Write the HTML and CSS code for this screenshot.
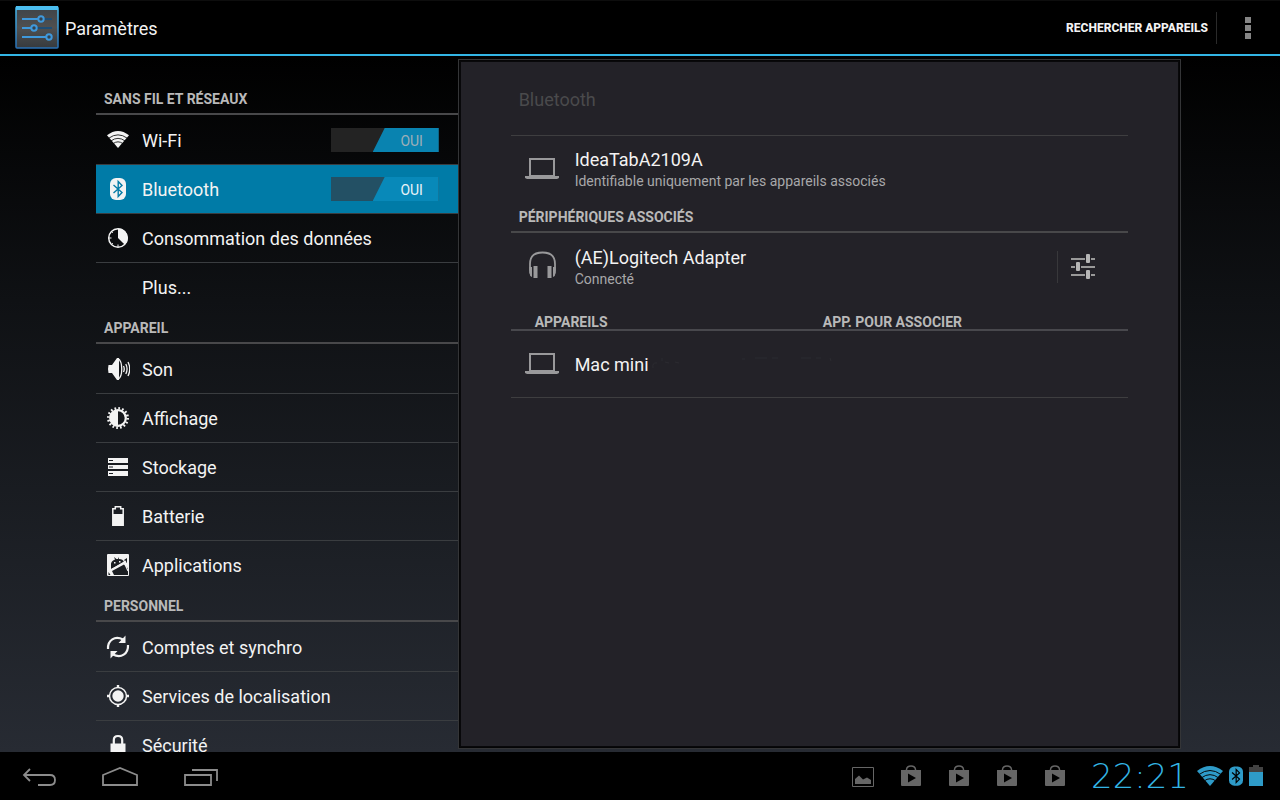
FILE: index.html
```html
<!DOCTYPE html>
<html lang="fr">
<head>
<meta charset="utf-8">
<meta name="viewport" content="width=device-width, initial-scale=1">
<title>Paramètres</title>
<link rel="stylesheet" href="styles.css">
</head>
<body>
<svg class="defs" aria-hidden="true">
  <defs>
    <linearGradient id="tile" x1="0" y1="0" x2="0" y2="1"><stop offset="0" stop-color="#3e4348"/><stop offset=".5" stop-color="#505050"/><stop offset="1" stop-color="#363a3e"/></linearGradient>
    <linearGradient id="edge" x1="0" y1="0" x2="0" y2="1"><stop offset="0" stop-color="#49bdf0"/><stop offset="1" stop-color="#286fb3"/></linearGradient>
    <symbol id="wifi" viewBox="0 0 26 20">
      <path fill="currentColor" d="M13 20 0 5Q13-5 26 5Z"/>
      <path class="wifi-gap" d="M2 8.500Q13 .5 24 8.500M4.500 11.800Q13 5.500 21.500 11.800M7 15Q13 10.500 19 15"/>
    </symbol>
    <symbol id="bt" viewBox="0 0 16 22">
      <rect width="16" height="22" rx="6" fill="currentColor"/>
      <path class="bt-rune" d="M3.500 7 12 14.500 8.200 18.500V3.500L12 7.500 3.500 15"/>
    </symbol>
    <symbol id="laptop" viewBox="0 0 34 22">
      <path fill="none" stroke="currentColor" stroke-width="2" d="M5 1h24v17H5z"/>
      <path fill="currentColor" d="M0 18h34v2l-2 1H2l-2-1z"/>
    </symbol>
    <symbol id="bag" viewBox="0 0 22 22">
      <path fill="none" stroke="currentColor" stroke-width="1.500" d="M6.500 6V4.500Q7 1 11 1t4.500 3.500V6"/>
      <path fill="currentColor" fill-rule="evenodd" d="M1 5h20v15q0 1-1 1H2q-1 0-1-1zM8 8.500v9l8-4.500z"/>
    </symbol>
  </defs>
</svg>

<header class="action-bar">
  <svg class="app-icon" viewBox="0 0 44 44" aria-hidden="true">
    <rect x="1" y="1" width="42" height="41" rx="1" fill="url(#tile)" stroke="url(#edge)" stroke-width="1.500"/>
    <path fill="#4bbef0" d="M1 0h42v4H1z"/>
    <path stroke="#1f4d74" stroke-width="2" d="M7 13h30M7 22h30"/>
    <path stroke="#3f99dc" stroke-width="2" d="M7 13h16M7 22h9M7 31h24"/>
    <g fill="#34414c" stroke="#3f99dc" stroke-width="2"><circle cx="26" cy="13" r="2.700"/><circle cx="19" cy="22" r="2.700"/><circle cx="34" cy="31" r="2.700"/></g>
  </svg>
  <h1 class="title">Paramètres</h1>
  <button class="action" type="button">RECHERCHER APPAREILS</button>
  <button class="overflow" type="button" aria-label="Plus d'options"><svg width="6" height="22" viewBox="0 0 6 22"><path fill="#858585" d="M0 0h6v6H0zM0 8h6v6H0zM0 16h6v6H0z"/></svg></button>
</header>

<main class="content">
  <nav class="sidebar" aria-label="Paramètres">
    <h2 class="category">SANS FIL ET RÉSEAUX</h2>
    <ul class="list">
      <li class="row">
        <a class="link" href="#"><svg class="icon" viewBox="0 0 24 24"><use href="#wifi" x="1" y="3" width="22" height="17"/></svg>Wi-Fi</a>
        <label class="switch"><input type="checkbox" role="switch" aria-label="Wi-Fi" checked><span class="thumb">OUI</span></label>
      </li>
      <li class="row selected">
        <a class="link" href="#" aria-current="page"><svg class="icon" viewBox="0 0 24 24"><use href="#bt" x="4" y="1" width="16" height="22"/></svg>Bluetooth</a>
        <label class="switch"><input type="checkbox" role="switch" aria-label="Bluetooth" checked><span class="thumb">OUI</span></label>
      </li>
      <li class="row"><a class="link" href="#"><svg class="icon" viewBox="0 0 24 24"><circle cx="12" cy="12" r="9.300" fill="none" stroke="currentColor" stroke-width="1.500"/><path fill="currentColor" d="M12 12V2.500A9.500 9.500 0 0 1 18.800 18.800z"/><path stroke="currentColor" d="M3 12h2.500M12 21v-2.500M5.300 5.300l1.500 1.500M5.300 18.700l1.500-1.500"/></svg>Consommation des données</a></li>
      <li class="row"><a class="link" href="#"><span class="icon"></span>Plus...</a></li>
    </ul>
    <h2 class="category">APPAREIL</h2>
    <ul class="list">
      <li class="row"><a class="link" href="#"><svg class="icon" viewBox="0 0 24 24"><path fill="currentColor" d="M2.500 8H6l5-7h2v22h-2l-5-7H2.500q-1-4 0-8z"/><g fill="none" stroke="currentColor" stroke-width="1.300"><path d="M12 1.500c5 3 5 18 0 21"/><path d="M17.500 9q1.500 3 0 6M19.800 7q2.500 5 0 10M22 5q3.500 7 0 14"/></g></svg>Son</a></li>
      <li class="row"><a class="link" href="#"><svg class="icon" viewBox="0 0 24 24"><circle cx="12" cy="12" r="9.700" fill="none" stroke="currentColor" stroke-width="2.600" stroke-dasharray="1.700 2.110"/><circle cx="12" cy="12" r="7.800" fill="none" stroke="currentColor" stroke-width="2.200"/><path fill="currentColor" d="M12 4a8 8 0 0 0 0 16z"/></svg>Affichage</a></li>
      <li class="row"><a class="link" href="#"><svg class="icon" viewBox="0 0 24 24"><path fill="currentColor" fill-rule="evenodd" d="M2 3h20v5H2zM2 10h20v4H2zM2 16h20v5H2zM3 5v1h4V5zM3 11.500v1h4v-1zM3 18v1h4v-1z"/></svg>Stockage</a></li>
      <li class="row"><a class="link" href="#"><svg class="icon" viewBox="0 0 24 24"><path fill="none" stroke="currentColor" stroke-width="1.500" d="M6.800 21.300V4.800h2.500v-2h5.400v2h2.500v16.500z"/><path fill="currentColor" d="M7 10h10v11H7z"/></svg>Batterie</a></li>
      <li class="row"><a class="link" href="#"><svg class="icon" viewBox="0 0 24 24"><rect x="1" y="1" width="22" height="22" rx="1" fill="currentColor"/><path fill="#1b1e22" d="M5 12Q4.500 8 9 6.500L8 4l2.500 2H12V4l1 2q4 0 5 3l-9 5-4 2zM6 18l12-6.500 4 4V22H8zM2.500 19l2 3h-2zM18 7l3-2v5z"/><path fill="currentColor" d="M8 9h1.500v1.500H8zM13 8h1.500v1.500H13z"/><path stroke="currentColor" stroke-width="1.200" d="M3 18 20 8M18 9l4 9"/></svg>Applications</a></li>
    </ul>
    <h2 class="category">PERSONNEL</h2>
    <ul class="list">
      <li class="row"><a class="link" href="#"><svg class="icon" viewBox="0 0 24 24"><g fill="none" stroke="currentColor" stroke-width="2.200"><path d="M2 14C1.500 5 9 .5 17 4.500"/><path d="M22 10c.5 9-7 13.500-15 9.500"/></g><path fill="currentColor" d="M19.500.5v7.500h-7zM4.500 23.500V16h7z"/></svg>Comptes et synchro</a></li>
      <li class="row"><a class="link" href="#"><svg class="icon" viewBox="0 0 24 24"><circle cx="12" cy="12" r="8.500" fill="none" stroke="currentColor" stroke-width="1.500"/><circle cx="12" cy="12" r="5.700" fill="currentColor"/><path stroke="currentColor" stroke-width="2.400" d="M12 1v3M12 20v3M1 12h3M20 12h3"/></svg>Services de localisation</a></li>
      <li class="row"><a class="link" href="#"><svg class="icon" viewBox="0 0 24 24"><path fill="none" stroke="currentColor" stroke-width="2.200" d="M7.800 12V7q0-4 4.200-4t4.200 4v5"/><path fill="currentColor" d="M4.500 10.500h15V23h-15z"/></svg>Sécurité</a></li>
    </ul>
  </nav>

  <section class="panel" aria-label="Bluetooth">
    <p class="status">Bluetooth</p>
    <div class="device">
      <svg class="device-icon" viewBox="0 0 34 34"><use href="#laptop" y="6" width="34" height="22"/></svg>
      <div class="device-text"><span class="name">IdeaTabA2109A</span><span class="summary">Identifiable uniquement par les appareils associés</span></div>
    </div>
    <h2 class="category">PÉRIPHÉRIQUES ASSOCIÉS</h2>
    <div class="device paired">
      <svg class="device-icon" viewBox="0 0 34 34"><path fill="none" stroke="currentColor" stroke-width="1.800" d="M6 24q-1-1-1-4v-6Q5 2.500 17.500 2.500T30 14v6q0 3-1 4"/><path fill="currentColor" d="M8.500 16h4v12h-4zM22.500 16h4v12h-4zM4.500 17H7v10q-2.500-1-2.500-4zM28 17h2.500v6q0 3-2.500 4z"/></svg>
      <div class="device-text"><span class="name">(AE)Logitech Adapter</span><span class="summary">Connecté</span></div>
      <button class="tune" type="button" aria-label="Réglages du périphérique"><svg width="26" height="26" viewBox="0 0 26 26"><path stroke="#999" stroke-width="2" d="M1 5h14M21 5h4M1 13h4M11 13h14M1 21h14M21 21h4"/><g fill="#b5b5b5"><rect x="16" y="0" width="4" height="9" rx="1"/><rect x="6" y="8" width="4" height="9" rx="1"/><rect x="16" y="16" width="4" height="9" rx="1"/></g></svg></button>
    </div>
    <div class="split"><h2>APPAREILS</h2><h2>APP. POUR ASSOCIER</h2></div>
    <div class="device last">
      <svg class="device-icon" viewBox="0 0 34 34"><use href="#laptop" y="6" width="34" height="22"/></svg>
      <div class="device-text"><span class="name">Mac mini</span></div>
      <svg class="residue" width="200" height="14" viewBox="0 0 200 14" aria-hidden="true"><path fill="none" stroke="#2b2b30" d="M6 6Q1 5 2 11M11 1v3M14 5l4 1M24 5l4 1M91 2h3M104 1h12M121 1h6M150 1h10M165 1h5M179 1l1 3"/></svg>
    </div>
  </section>
</main>

<footer class="system-bar">
  <button class="nav-key" type="button" aria-label="Retour"><svg width="36" height="22" viewBox="0 0 36 22"><path fill="none" stroke="#8c8c8c" stroke-width="1.800" d="M8 4 2 10l6 6M2 10h26q5 0 5 5t-5 5H16"/></svg></button>
  <button class="nav-key" type="button" aria-label="Accueil"><svg width="38" height="22" viewBox="0 0 38 22"><path fill="none" stroke="#8c8c8c" stroke-width="1.800" d="M2 20V10l17-7 17 7v10z"/></svg></button>
  <button class="nav-key" type="button" aria-label="Applications récentes"><svg width="36" height="22" viewBox="0 0 36 22"><path fill="none" stroke="#8c8c8c" stroke-width="1.800" d="M3 10h26v10H3zM10 5h25v11"/></svg></button>
  <div class="notifications">
    <svg class="note" viewBox="0 0 22 22"><path fill="none" stroke="currentColor" d="M.5 2.500h21v19H.5z"/><path fill="currentColor" d="M3 19v-5l4-3.500 4 4 4-2 4 2.500v4z"/></svg>
    <svg class="note" viewBox="0 0 22 22"><use href="#bag"/></svg>
    <svg class="note" viewBox="0 0 22 22"><use href="#bag"/></svg>
    <svg class="note" viewBox="0 0 22 22"><use href="#bag"/></svg>
    <svg class="note" viewBox="0 0 22 22"><use href="#bag"/></svg>
  </div>
  <div class="status-area">
    <time class="clock">22:21</time>
    <svg width="26" height="20"><use href="#wifi" width="26" height="20"/></svg>
    <svg width="14" height="20"><use href="#bt" width="14" height="20"/></svg>
    <svg width="14" height="22" viewBox="0 0 14 22"><path fill="#424242" d="M0 2h4V0h6v2h4v6H0z"/><path fill="currentColor" d="M0 7h14v14H0z"/></svg>
  </div>
</footer>
</body>
</html>
```
FILE: styles.css
```css
* { box-sizing: border-box; }

body {
  margin: 0;
  height: 100vh;
  display: flex;
  flex-direction: column;
  overflow: hidden;
  background: #000;
  color: #f3f3f3;
  font-family: Roboto, "Noto Sans", sans-serif;
  font-size: 18px;
}

h1, h2, p, ul { margin: 0; padding: 0; font-weight: 400; }
ul { list-style: none; }
button { margin: 0; padding: 0; border: 0; background: none; color: inherit; font: inherit; }
svg { display: block; flex: none; }
.defs { position: absolute; width: 0; height: 0; }

.wifi-gap { fill: none; stroke: #08090a; stroke-width: 1; }
.bt-rune { fill: none; stroke: var(--rune, #047ba6); stroke-width: 1.4; }

.action-bar {
  flex: none;
  height: 56px;
  display: flex;
  align-items: center;
  padding-left: 15px;
  border-top: 1px solid #0d0d0d;
  border-bottom: 2px solid #33b5e5;
}
.app-icon { width: 44px; height: 44px; margin-right: 6px; }
.title { flex: 1; padding-top: 2px; font-size: 18px; }
.action {
  height: 32px;
  padding-right: 8px;
  border-right: 1px solid #2a2a2a;
  font-size: 12px;
  font-weight: 800;
}
.overflow { width: 63px; padding-right: 2px; display: flex; justify-content: center; }

.content {
  flex: 1;
  min-height: 0;
  display: grid;
  grid-template-columns: minmax(0, 1fr) minmax(0, 2fr);
  padding: 0 99px 0 96px;
  background: linear-gradient(#000, #0f1114 35%, #272b33);
}

.sidebar { padding-top: 26px; overflow: hidden; }

.category {
  height: 33px;
  padding-left: 8px;
  border-bottom: 2px solid #48484a;
  color: #b9b9b9;
  font-size: 14px;
  font-weight: 700;
  line-height: 34px;
}

.row {
  display: flex;
  align-items: center;
  height: 49px;
  padding-right: 19px;
  border-top: 1px solid #3a3d40;
}
.row:first-child { border-top-color: transparent; }
.row.selected { background: #007ba7; }
.link {
  flex: 1;
  display: flex;
  align-items: center;
  height: 100%;
  padding-left: 10px;
  color: inherit;
  text-decoration: none;
  white-space: nowrap;
}
.icon { width: 24px; height: 24px; margin-right: 12px; }

.switch { width: 108px; height: 24px; background: #232323; display: flex; justify-content: flex-end; color: #9dafb8; }
.switch input { position: absolute; opacity: 0; margin: 0; }
.thumb {
  width: 66px;
  padding-left: 12px;
  background: #0983b0;
  clip-path: polygon(12px 0, 100% 0, 100% 100%, 0 100%);
  text-align: center;
  font-size: 14px;
  line-height: 26px;
}
.selected .switch { background: #235064; color: #e8f3f8; }
.selected .thumb { background: #0889b9; }

.panel {
  margin: 3px 0;
  padding: 0 51px;
  border: 2px solid #050506;
  outline: 1px solid #343537;
  outline-offset: -1px;
  background: #232228;
  box-shadow: inset 0 0 0 1px #08080a;
}
.panel .category { height: 32px; line-height: 32px; }
.status { height: 75px; padding: 4px 8px 0; color: #4a4a4c; line-height: 70px; border-bottom: 1px solid #3e3e40; }
.device { display: flex; align-items: center; height: 65px; padding-left: 14px; }
.device-icon { width: 34px; height: 34px; margin-right: 16px; color: #99999b; }
.device-text { display: flex; flex-direction: column; padding-top: 2px; }
.name { line-height: 22px; }
.summary { color: #a8a8aa; font-size: 14px; line-height: 20px; }
.paired { height: 66px; padding-top: 1px; }
.last { height: 67px; border-bottom: 1px solid #3e3e40; }
.residue { margin-left: 2px; }
.tune {
  margin-left: auto;
  width: 71px;
  height: 32px;
  padding-left: 12px;
  border-left: 1px solid #38383b;
}
.split {
  height: 32px;
  display: grid;
  grid-template-columns: 1fr 1fr;
  align-items: end;
  padding: 0 17px 0 24px;
  border-bottom: 2px solid #48484d;
}
.split h2 { color: #b9b9b9; font-size: 14px; font-weight: 700; line-height: 14px; }

.system-bar { flex: none; height: 48px; display: flex; align-items: center; padding: 0 17px 0 0; background: #000; }
.nav-key { width: 80px; height: 48px; display: flex; justify-content: center; align-items: center; }
.notifications { margin-left: auto; display: flex; gap: 26px; color: #666; }
.note { width: 22px; height: 22px; }
.status-area { --rune: #000; display: flex; align-items: center; gap: 6px; margin-left: 22px; color: #2e9bc8; }
.clock { width: 104px; margin-right: -1px; color: #33b5e5; font-family: "DejaVu Sans Light", "DejaVu Sans", sans-serif; font-size: 34px; font-weight: 200; line-height: 48px; text-align: center; }
```
